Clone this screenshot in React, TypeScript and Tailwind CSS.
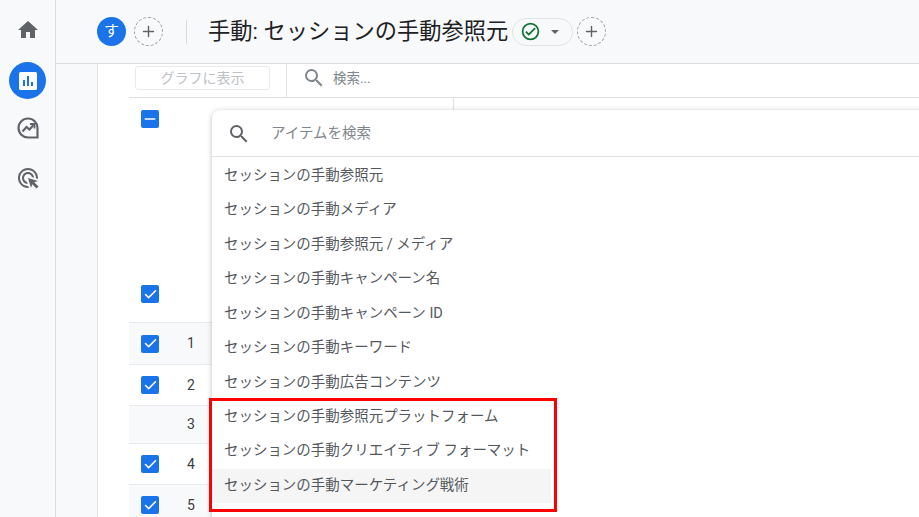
import { Check, Minus, Plus } from 'lucide-react'

const FONT = 'font-["Roboto","Noto_Sans_CJK_JP",sans-serif]'

const items = [
  'セッションの手動参照元',
  'セッションの手動メディア',
  'セッションの手動参照元 / メディア',
  'セッションの手動キャンペーン名',
  'セッションの手動キャンペーン ID',
  'セッションの手動キーワード',
  'セッションの手動広告コンテンツ',
  'セッションの手動参照元プラットフォーム',
  'セッションの手動クリエイティブ フォーマット',
  'セッションの手動マーケティング戦術',
]

const rows = [
  { n: 1, checked: true, h: 'h-[42px]', bg: 'bg-[#f8f9fa]' },
  { n: 2, checked: true, h: 'h-[41px]', bg: 'bg-white' },
  { n: 3, checked: false, h: 'h-[38px]', bg: 'bg-[#f8f9fa]' },
  { n: 4, checked: true, h: 'h-[41px]', bg: 'bg-white' },
  { n: 5, checked: true, h: 'h-[41px]', bg: 'bg-[#f8f9fa]' },
]

function SearchIcon({ className }: { className: string }) {
  return (
    <svg viewBox="0 0 24 24" className={className}>
      <path d="M15.5 14h-.79l-.28-.27A6.471 6.471 0 0 0 16 9.5 6.5 6.5 0 1 0 9.5 16c1.61 0 3.09-.59 4.23-1.57l.27.28v.79l5 4.99L20.49 19l-4.99-5zm-6 0C7.01 14 5 11.99 5 9.5S7.01 5 9.5 5 14 7.01 14 9.5 11.99 14 9.5 14z" />
    </svg>
  )
}

function Box({ minus }: { minus?: boolean }) {
  return (
    <span className="flex h-[18px] w-[18px] items-center justify-center rounded-[2px] bg-[#1a73e8]">
      {minus ? (
        <Minus className="h-4 w-4 text-white" strokeWidth={2.5} />
      ) : (
        <Check className="h-[15px] w-[15px] text-white" strokeWidth={2.5} />
      )}
    </span>
  )
}

function AddButton() {
  return (
    <span className="flex h-[29px] w-[29px] items-center justify-center rounded-full border border-dashed border-[#9aa0a6]">
      <Plus className="h-[17px] w-[17px] text-[#5f6368]" strokeWidth={2} />
    </span>
  )
}

function Sidebar() {
  return (
    <aside className="flex w-[56px] shrink-0 flex-col items-center border-r border-r-[#dadce0] bg-[#f8f9fa] pt-[18px]">
      <svg viewBox="0 0 24 24" className="h-[24px] w-[24px] shrink-0 fill-[#5f6368]">
        <path d="M10 20v-6h4v6h5v-8h3L12 3 2 12h3v8z" />
      </svg>
      <span className="mt-[20px] flex h-[37px] w-[37px] shrink-0 items-center justify-center rounded-full bg-[#1a73e8]">
        <svg viewBox="0 0 18 18" className="h-[18px] w-[18px]">
          <rect width="18" height="18" rx="1.5" fill="#fff" />
          <path d="M4 8h2v6H4zM8 4h2v10H8zM12 10h2v4h-2z" fill="#1a73e8" />
        </svg>
      </span>
      <svg viewBox="0 0 24 24" className="mt-[17px] h-[24px] w-[24px] shrink-0 fill-none stroke-[#5f6368]">
        <path d="M21.5 21.5H12A9.5 9.5 0 1 1 21.5 12z" strokeWidth="2.2" />
        <path d="M6.5 15.5l4-4.5 3 2.5 4-4.5" strokeWidth="2.2" />
        <path d="M14 8h4.5v4.5" strokeWidth="1.8" />
      </svg>
      <svg viewBox="0 0 24 24" className="mt-[26px] h-[24px] w-[24px] shrink-0 fill-[#5f6368]">
        <path d="M11.71 17.99C8.53 17.84 6 15.22 6 12c0-3.31 2.69-6 6-6 3.22 0 5.84 2.53 5.99 5.71l-2.1-.63C15.48 9.31 13.89 8 12 8c-2.21 0-4 1.79-4 4 0 1.89 1.31 3.48 3.08 3.89l.63 2.1zM22 12c0 .3-.01.6-.04.9l-1.97-.59C20 12.21 20 12.1 20 12c0-4.42-3.58-8-8-8s-8 3.58-8 8 3.58 8 8 8c.1 0 .21 0 .31-.01l.59 1.97c-.3.03-.6.04-.9.04-5.52 0-10-4.48-10-10S6.48 2 12 2s10 4.48 10 10zm-3.77 4.26L22 15l-10-3 3 10 1.26-3.77 4.27 4.27 1.98-1.98-4.28-4.26z" />
      </svg>
    </aside>
  )
}

function Header() {
  return (
    <header className="flex h-[64px] shrink-0 items-center border-b border-b-[#dadce0] bg-[#f8f9fa] pl-[41px]">
      <span className="flex h-[29px] w-[29px] items-center justify-center rounded-full bg-[#1a73e8] text-[15px] text-white">
        す
      </span>
      <span className="ml-[8px]">
        <AddButton />
      </span>
      <span className="ml-[23px] h-[24px] w-px bg-[#dadce0]" />
      <h1 className="ml-[21px] text-[22.25px] leading-none font-normal whitespace-nowrap text-[#202124]">
        手動: セッションの手動参照元
      </h1>
      <span className="ml-[4px] flex h-[28px] w-[61px] items-center rounded-full border border-[#e0e3e7] pl-[7px]">
        <svg viewBox="0 0 24 24" className="h-[21px] w-[21px] fill-[#137333]">
          <path d="M12 2a10 10 0 1 0 0 20 10 10 0 0 0 0-20zm0 18a8 8 0 1 1 0-16 8 8 0 0 1 0 16zm4.6-12.6L10 14l-2.6-2.6L6 12.8l4 4 8-8z" />
        </svg>
        <span className="ml-[10px] h-0 w-0 border-x-[4px] border-t-[4px] border-x-transparent border-t-[#5f6368]" />
      </span>
      <span className="ml-[4px]">
        <AddButton />
      </span>
    </header>
  )
}

function Table() {
  return (
    <div className="ml-[31px] flex-1 overflow-hidden">
      <div className="flex h-[34px] items-start border-b border-b-[#e0e0e0]">
        <div className="flex h-[33px] w-[158px] shrink-0 items-start border-r border-r-[#e0e0e0] pl-[6px] pt-[2px]">
          <span className="flex h-[24px] w-[135px] items-center justify-center rounded-[3px] border border-[#e8eaed] text-[14px] text-[#bdc1c6]">
            グラフに表示
          </span>
        </div>
        <div className="flex h-[28px] items-center pl-[15px]">
          <SearchIcon className="h-[24px] w-[24px] fill-[#80868b]" />
          <span className="ml-[7px] text-[13.5px] text-[#80868b]">検索...</span>
        </div>
      </div>
      <div className="h-[224px]">
        <div className="h-[12px] w-[325px] border-r border-r-[#e0e0e0]" />
        <div className="pl-[12px]">
          <Box minus />
          <div className="mt-[157px]">
            <Box />
          </div>
        </div>
      </div>
      {rows.map((r) => (
        <div key={r.n} className={`flex items-center border-t border-t-[#e8eaed] pl-[12px] ${r.h} ${r.bg}`}>
          <span className="w-[18px]">{r.checked && <Box />}</span>
          <span className="ml-[28px] text-[14px] text-[#3c4043]">{r.n}</span>
        </div>
      ))}
    </div>
  )
}

function ItemMenu() {
  return (
    <div className="absolute top-[110px] left-[212px] h-[420px] w-[760px] rounded-tl-[8px] bg-white shadow-[0_1px_5px_rgba(60,64,67,0.35)]">
      <div className="flex h-[47px] items-center border-b border-b-[#e0e0e0] pl-[15px] pt-[1px]">
        <SearchIcon className="h-[24px] w-[24px] fill-[#5f6368]" />
        <span className="ml-[20px] text-[14.5px] text-[#80868b]">アイテムを検索</span>
      </div>
      <ul className="pt-[1.6px]">
        {items.map((item, i) => (
          <li
            key={item}
            className={`flex h-[34.44px] w-[339px] items-center pl-[12px] text-[14.47px] whitespace-nowrap text-[#54585d] ${
              i === 9 ? 'bg-[#f5f5f5]' : ''
            }`}
          >
            {item}
          </li>
        ))}
      </ul>
    </div>
  )
}

export default function App() {
  return (
    <div className={`relative flex h-[517px] w-[919px] overflow-hidden bg-white ${FONT}`}>
      <Sidebar />
      <main className="flex min-w-0 flex-1 flex-col">
        <Header />
        <div className="flex flex-1">
          <div className="w-[42px] shrink-0 border-r border-r-[#e0e3e7] bg-[#f8f9fa]" />
          <Table />
        </div>
      </main>
      <ItemMenu />
      <div className="absolute top-[398px] left-[209px] h-[114px] w-[348px] border-[3px] border-[#ff0000]" />
    </div>
  )
}
